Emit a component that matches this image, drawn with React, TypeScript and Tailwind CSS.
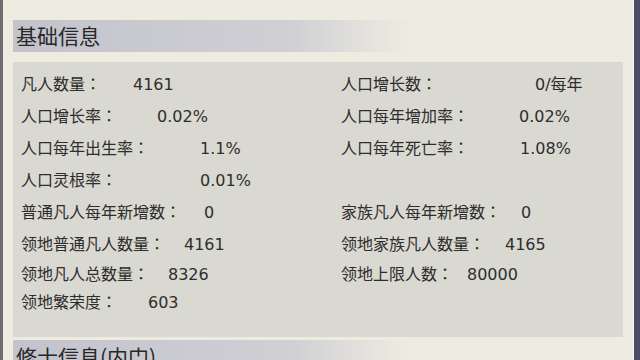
type Cell = { label: string; value: string; w: number } | null;

const rows: { h: string; left: Cell; right: Cell }[] = [
  { h: "h-8", left: { label: "凡人数量：", value: "4161", w: 112 }, right: { label: "人口增长数：", value: "0/每年", w: 194 } },
  { h: "h-8", left: { label: "人口增长率：", value: "0.02%", w: 136 }, right: { label: "人口每年增加率：", value: "0.02%", w: 178 } },
  { h: "h-8", left: { label: "人口每年出生率：", value: "1.1%", w: 179 }, right: { label: "人口每年死亡率：", value: "1.08%", w: 179 } },
  { h: "h-8", left: { label: "人口灵根率：", value: "0.01%", w: 179 }, right: null },
  { h: "h-8", left: { label: "普通凡人每年新增数：", value: "0", w: 183 }, right: { label: "家族凡人每年新增数：", value: "0", w: 180 } },
  { h: "h-8", left: { label: "领地普通凡人数量：", value: "4161", w: 163 }, right: { label: "领地家族凡人数量：", value: "4165", w: 164 } },
  { h: "h-7", left: { label: "领地凡人总数量：", value: "8326", w: 147 }, right: { label: "领地上限人数：", value: "80000", w: 126 } },
  { h: "h-7", left: { label: "领地繁荣度：", value: "603", w: 127 }, right: null },
];

const cjk = '"Noto Sans CJK JP", "Noto Sans CJK SC", sans-serif';

function InfoCell({ cell }: { cell: Cell }) {
  if (!cell) return <div />;
  return (
    <div className="flex items-baseline whitespace-nowrap leading-none">
      <span className="inline-block shrink-0" style={{ width: cell.w, fontFamily: cjk }}>
        {cell.label}
      </span>
      <span>{cell.value}</span>
    </div>
  );
}

function SectionHeader({ title }: { title: string }) {
  return (
    <div
      className="h-[34px] flex items-center pl-[3px] bg-gradient-to-r from-[#c3c3cc] via-[#cfcfd4] via-45% to-[#eeece1] to-65% text-[21px] text-[#282828]"
      style={{ fontFamily: cjk }}
    >
      {title}
    </div>
  );
}

export default function App() {
  return (
    <div
      className="w-[640px] h-[360px] overflow-hidden flex bg-[#eeece1] text-[#2e2e2e]"
      style={{ fontFamily: '"DejaVu Sans", "Noto Sans CJK SC", sans-serif' }}
    >
      <div className="w-[3px] shrink-0 bg-[#6b6b70]" />
      <div className="flex-1 pl-[10px] pr-[10px] pt-[20px] flex flex-col">
        <SectionHeader title="基础信息" />
        <div className="mt-[10px] bg-[#d9d8d1] pt-[6px] pb-[21px] pl-[8px] text-[16px]">
          {rows.map((r, i) => (
            <div key={i} className={`${r.h} grid grid-cols-[320px_1fr] items-center`}>
              <InfoCell cell={r.left} />
              <InfoCell cell={r.right} />
            </div>
          ))}
        </div>
        <div className="mt-[3px]">
          <SectionHeader title="修士信息(内门)" />
        </div>
      </div>
      <div className="w-[1px] shrink-0 bg-[#f6f5ee]" />
      <div className="w-[6px] shrink-0 bg-[#4a4d64]" />
    </div>
  );
}
